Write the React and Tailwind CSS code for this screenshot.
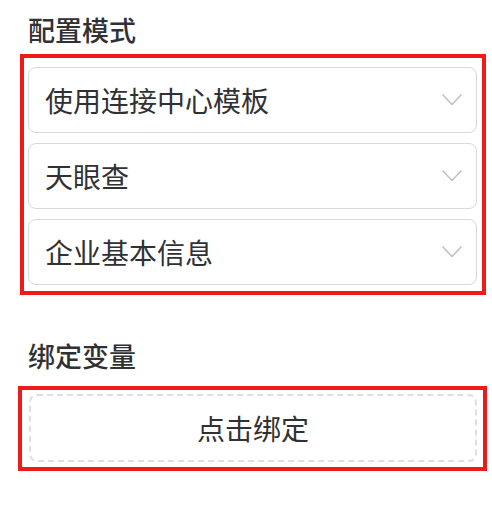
import { useState } from "react"

const font = { fontFamily: '"Noto Sans CJK SC", "Noto Sans", sans-serif' }

const Chevron = () => (
  <svg width="20" height="12" viewBox="0 0 20 12" fill="none" className="shrink-0">
    <path d="M1 1 L10 10.5 L19 1" stroke="#bfc2c8" strokeWidth="1.7" strokeLinejoin="round" strokeLinecap="round" />
  </svg>
)

const SelectBox = ({ value }) => (
  <div className="h-[66px] flex items-center justify-between pl-[16px] pr-[14px] bg-white border-[1.5px] border-[#d6d8dd] rounded-[8px] cursor-pointer">
    <span className="text-[28px] leading-none text-[#303133]">{value}</span>
    <Chevron />
  </div>
)

export default function App() {
  // config mode values
  const [modes] = useState(["使用连接中心模板", "天眼查", "企业基本信息"])

  return (
    <div className="w-[492px] h-[512px] bg-white overflow-hidden" style={font}>
      <h3 className="ml-[28px] pt-[12px] mb-[6px] text-[27px] leading-[36px] font-medium text-[#303133]">配置模式</h3>

      <div className="ml-[20px] w-[466px] border-4 border-[#f01a1a] pl-[4px] pr-[5px] pt-[8.7px] pb-[6px] flex flex-col gap-[10px]">
        {modes.map((m, i) => (
          <SelectBox key={i} value={m} />
        ))}
      </div>

      <h3 className="ml-[28px] mt-[43px] mb-[12px] text-[27px] leading-[36px] font-medium text-[#303133]">绑定变量</h3>

      <div className="ml-[18px] w-[469px] border-4 border-[#f01a1a] pl-[7px] pr-[6px] pt-[4px] pb-[5px]">
        <div className="h-[68px] flex items-center justify-center border-2 border-dashed border-[#dcdfe6] rounded-[8px] cursor-pointer">
          <span className="text-[28px] leading-none text-[#303133]">点击绑定</span>
        </div>
      </div>
    </div>
  )
}
